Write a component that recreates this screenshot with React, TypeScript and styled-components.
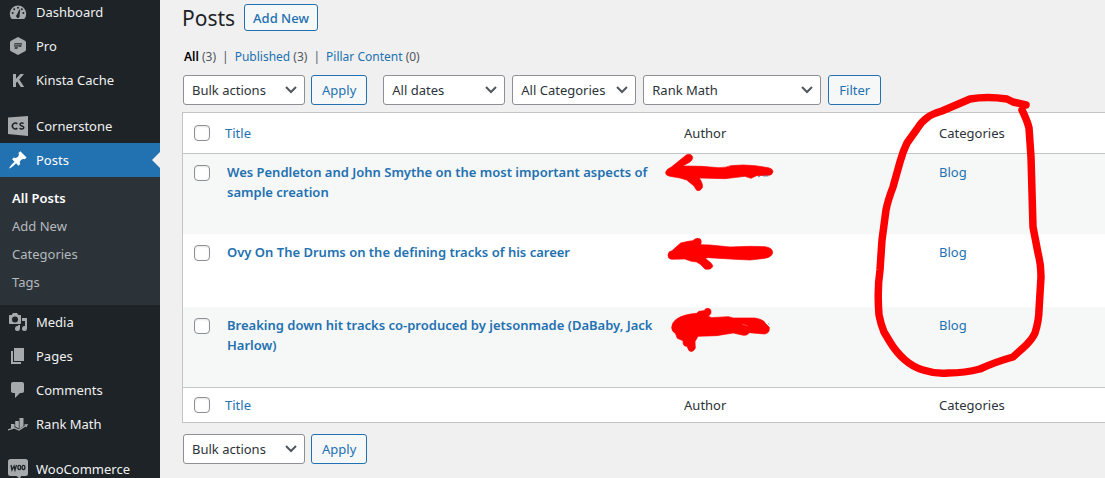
import React from "react";
import styled, { createGlobalStyle, css } from "styled-components";

const GlobalStyle = createGlobalStyle`
  *, *::before, *::after { box-sizing: border-box; }
  body {
    margin: 0;
    background: #f0f0f0;
    color: #2c3338;
    font-family: "Noto Sans", "Open Sans", sans-serif;
    font-size: 13px;
    line-height: 20px;
  }
  a { color: #2271b1; text-decoration: none; }
`;

const Screen = styled.div`
  position: relative;
  display: flex;
  height: 100vh;
  overflow: hidden;
`;

const Sidebar = styled.nav`
  flex: 0 0 160px;
  background: #1d2327;
  overflow: hidden;
`;

const Menu = styled.ul`
  list-style: none;
  margin: -5px 0 0;
  padding: 0;
`;

const MenuItem = styled.li<{ $gap?: number }>`
  margin-top: ${(p) => p.$gap ?? 0}px;
`;

const MenuLink = styled.a<{ $active?: boolean }>`
  position: relative;
  display: flex;
  align-items: center;
  height: 34px;
  padding-left: 8px;
  gap: 8px;
  font-size: 13px;
  color: ${(p) => (p.$active ? "#fff" : "#f0f0f1")};
  background: ${(p) => (p.$active ? "#2271b1" : "transparent")};
  svg { flex: 0 0 20px; color: ${(p) => (p.$active ? "#fff" : "#a7aaad")}; }
  ${(p) =>
    p.$active &&
    css`
      &::after {
        content: "";
        position: absolute;
        right: 0;
        top: 9px;
        border: 8px solid transparent;
        border-right-color: #f0f0f0;
        border-left-width: 0;
      }
    `}
`;

const SubMenu = styled.ul`
  list-style: none;
  margin: 0;
  padding: 7px 0 9px;
  background: #2c3338;
`;

const SubLink = styled.a<{ $current?: boolean }>`
  display: block;
  padding: 4px 12px;
  font-size: 13px;
  color: ${(p) => (p.$current ? "#fff" : "#b4b9be")};
  font-weight: ${(p) => (p.$current ? 600 : 400)};
`;

const Main = styled.main`
  flex: 1;
  min-width: 0;
  padding: 4px 0 0 22px;
`;

const Heading = styled.header`
  display: flex;
  align-items: center;
  gap: 9px;
  height: 27px;
`;

const Title = styled.h1`
  margin: 0;
  font-size: 21px;
  line-height: 28px;
  font-weight: 400;
  color: #1d2327;
`;

const AddNew = styled.button`
  height: 27px;
  padding: 0 8px;
  border: 1px solid #2271b1;
  border-radius: 3px;
  background: #f6f7f7;
  color: #2271b1;
  font: 500 13px "Noto Sans", sans-serif;
`;

const Views = styled.ul`
  display: flex;
  gap: 6px;
  list-style: none;
  margin: 16px 0 8px;
  padding: 0 0 0 2px;
  font-size: 12px;
  color: #50575e;
  li + li::before { content: "|"; margin-right: 6px; }
`;

const CurrentView = styled.a`
  color: #000;
  font-weight: 600;
`;

const Toolbar = styled.div`
  display: flex;
  align-items: center;
  padding: 0 1px;
  gap: 7px;
`;

const Group = styled.div`
  display: flex;
  gap: 6px;
  margin-right: 9px;
`;

const SelectBox = styled.span<{ $width: number }>`
  position: relative;
  display: block;
  width: ${(p) => p.$width}px;
  svg { position: absolute; right: 8px; top: 10px; pointer-events: none; }
`;

const Select = styled.select`
  appearance: none;
  display: block;
  width: 100%;
  height: 30px;
  padding: 0 24px 0 8px;
  border: 1px solid #8c8f94;
  border-radius: 3px;
  background: #fff;
  color: #2c3338;
  font: 13px "Noto Sans", sans-serif;
`;

const Button = styled.button`
  height: 30px;
  padding: 0 10px;
  border: 1px solid #2271b1;
  border-radius: 3px;
  background: #f6f7f7;
  color: #2271b1;
  font: 13px "Noto Sans", sans-serif;
`;

const Table = styled.table`
  width: 100%;
  margin: 7px 0 11px;
  border: 1px solid #c3c4c7;
  border-right: 0;
  border-spacing: 0;
  table-layout: fixed;
  background: #fff;
  th, td { padding: 0; text-align: left; font-weight: 400; vertical-align: top; }
  thead th { height: 41px; vertical-align: middle; border-bottom: 1px solid #c3c4c7; }
  tfoot th { height: 35px; vertical-align: middle; border-top: 1px solid #c3c4c7; }
`;

const CheckCol = styled.col`
  width: 42px;
`;
const TitleCol = styled.col``;
const InfoCol = styled.col<{ $width: string }>`
  width: ${(p) => p.$width};
`;

const PostRow = styled.tr`
  &:nth-child(odd) { background: #f6f7f7; }
  td { height: 73px; padding: 8px 0 32px; }
`;

const TitleCell = styled.td`
  a { display: block; padding: 0 16px 0 2px; font-weight: 600; }
`;

const Check = styled.input`
  appearance: none;
  display: block;
  width: 16px;
  height: 16px;
  margin: 0 0 0 11px;
  border: 1px solid #8c8f94;
  border-radius: 4px;
  background: #fff;
  box-shadow: inset 0 1px 2px rgba(0, 0, 0, 0.1);
  td & { margin-top: 3px; }
`;

const Markup = styled.svg`
  position: absolute;
  left: 0;
  top: 0;
  pointer-events: none;
`;

const dark = "#1d2327";

const DashboardIcon = () => (
  <svg width="20" height="20" viewBox="0 0 20 20">
    <path fill="currentColor" d="M3.8 17h12.4a8.2 8.2 0 1 0-12.4 0z" />
    <g fill={dark}>
      <circle cx="10" cy="5.7" r="1" /><circle cx="6.2" cy="7.3" r="1" /><circle cx="13.8" cy="7.3" r="1" />
      <circle cx="4.6" cy="11" r="1" /><circle cx="15.4" cy="11" r="1" />
      <path d="M11.3 7.4l.9.3-.6 5.600a1.800 1.800 0 1 1-2.600-.8z" />
    </g>
  </svg>
);
const ProIcon = () => (
  <svg width="20" height="20" viewBox="0 0 20 20">
    <path fill="currentColor" d="M10 1l7 3.7q1 .6 1 1.6v7.4q0 1-1 1.6L10 19l-7-3.700q-1-.6-1-1.600V6.300q0-1 1-1.600z" />
    <path fill={dark} opacity=".75" d="M6.500 7H14l-.8 4H10l-.7 2H6.500l.5-2h-.8z" />
    <path stroke="#a7aaad" strokeWidth=".5" d="M7 8.600h6M7 10.200h4" />
  </svg>
);
const KinstaIcon = () => (
  <svg width="20" height="20" viewBox="0 0 20 20">
    <path fill="currentColor" d="M5 4h3v4.800L12.400 4H16l-4.800 5.500L16.200 17h-3.500L9.200 11.600 8 13v4H5z" />
  </svg>
);
const CornerstoneIcon = () => (
  <svg width="20" height="20" viewBox="0 0 20 20">
    <path fill="currentColor" d="M0 1.500L20 0v20L0 18z" />
    <g fill="none" stroke={dark} strokeWidth="1.500">
      <path d="M9.300 7.900A2.900 2.900 0 1 0 9.300 12.100" />
      <path d="M15.600 7.500c-1-.8-3.600-.9-3.600.9 0 2 3.800 1 3.800 3 0 2-3 1.800-4.200.8" />
    </g>
  </svg>
);
const PinIcon = () => (
  <svg width="20" height="20" viewBox="0 0 20 20">
    <path fill="currentColor" d="M10.440 3.020l1.820-1.820 6.360 6.350-1.830 1.820c-1.050-.68-2.480-.57-3.410.36l-.75.750c-.92.930-1.040 2.350-.350 3.410l-1.830 1.820-2.410-2.410-2.800 2.790c-.42.420-3.380 2.710-3.800 2.290s1.860-3.390 2.280-3.810l2.790-2.790L4.100 9.360l1.830-1.820c1.050.69 2.480.57 3.400-.36l.75-.75c.93-.92 1.050-2.350.36-3.410z" />
  </svg>
);
const MediaIcon = () => (
  <svg width="20" height="20" viewBox="0 0 20 20">
    <path fill="currentColor" fillRule="evenodd" d="M13 11V4c0-.55-.45-1-1-1h-1.670L9 1H5L3.670 3H2c-.55 0-1 .45-1 1v7c0 .55.45 1 1 1h10c.55 0 1-.45 1-1zM7 4.500a3 3 0 1 1 0 6 3 3 0 0 1 0-6zM14 6h5v10.500a2.500 2.500 0 1 1-2-2.450V9h-3zm-4 8.050V13h2v3.500a2.500 2.500 0 1 1-2-2.450z" />
  </svg>
);
const PagesIcon = () => (
  <svg width="20" height="20" viewBox="0 0 20 20">
    <path fill="currentColor" d="M6 15V2h10v13zm-1 1h8v2H3V5h2z" />
  </svg>
);
const CommentsIcon = () => (
  <svg width="20" height="20" viewBox="0 0 20 20">
    <path fill="currentColor" d="M5 2h9c1.100 0 2 .9 2 2v7c0 1.100-.9 2-2 2h-2l-5 5v-5H5c-1.100 0-2-.9-2-2V4c0-1.100.9-2 2-2z" />
  </svg>
);
const RankIcon = () => (
  <svg width="20" height="20" viewBox="0 0 20 20">
    <path fill="currentColor" d="M3 10h3.500v3.500L3 15zM7.200 7h3.600v7.500l-3.600-2zM11.500 4h4v8l-4 3z" />
    <path fill="none" stroke="currentColor" strokeWidth="1.300" d="M0 16l6.500-2 4.500 2 7-4.500" />
    <path fill="currentColor" d="M16 10.500l4-.5-1.500 3.500z" />
  </svg>
);
const WooIcon = () => (
  <svg width="20" height="20" viewBox="0 0 20 20">
    <path fill="currentColor" d="M2.500 0h15Q20 0 20 2.500v12q0 2.500-2.500 2.500H13l-1 3-3.500-3h-6Q0 17 0 14.500v-12Q0 0 2.500 0z" />
    <g fill="none" stroke={dark} strokeWidth="1.300">
      <path d="M3 6l1 5 2-4 1 4 1.500-5" />
      <ellipse cx="11.300" cy="8.500" rx="1.400" ry="2.100" /><ellipse cx="15.500" cy="8.500" rx="1.400" ry="2.100" />
    </g>
  </svg>
);

type Item = { label: string; icon: React.FC; gap?: number; sub?: string[] };

const menu: Item[] = [
  { label: "Dashboard", icon: DashboardIcon },
  { label: "Pro", icon: ProIcon },
  { label: "Kinsta Cache", icon: KinstaIcon },
  { label: "Cornerstone", icon: CornerstoneIcon, gap: 12 },
  { label: "Posts", icon: PinIcon, sub: ["All Posts", "Add New", "Categories", "Tags"] },
  { label: "Media", icon: MediaIcon },
  { label: "Pages", icon: PagesIcon },
  { label: "Comments", icon: CommentsIcon },
  { label: "Rank Math", icon: RankIcon },
  { label: "WooCommerce", icon: WooIcon, gap: 11 },
];

const posts = [
  "Wes Pendleton and John Smythe on the most important aspects of sample creation",
  "Ovy On The Drums on the defining tracks of his career",
  "Breaking down hit tracks co-produced by jetsonmade (DaBaby, Jack Harlow)",
];

const Dropdown = ({ label, text, width }: { label: string; text: string; width: number }) => (
  <SelectBox $width={width}>
    <Select aria-label={label}>
      <option>{text}</option>
    </Select>
    <svg width="12" height="10" viewBox="0 0 12 10">
      <path d="M1 2l5 5 5-5" fill="none" stroke="#50575e" strokeWidth="2" />
    </svg>
  </SelectBox>
);

const BulkActions = () => (
  <Group>
    <Dropdown label="Select bulk action" text="Bulk actions" width={122} />
    <Button>Apply</Button>
  </Group>
);

const HeadingCells = () => (
  <tr>
    <th><Check type="checkbox" aria-label="Select all" /></th>
    <th><a href="#title">Title</a></th>
    <th>Author</th>
    <th>Categories</th>
  </tr>
);

export default function App() {
  return (
    <Screen>
      <GlobalStyle />
      <Sidebar>
        <Menu>
          {menu.map(({ label, icon: Icon, gap, sub }) => (
            <MenuItem key={label} $gap={gap}>
              <MenuLink href="#menu" $active={!!sub}>
                <Icon />
                {label}
              </MenuLink>
              {sub && (
                <SubMenu>
                  {sub.map((s, i) => (
                    <li key={s}><SubLink href="#sub" $current={i === 0}>{s}</SubLink></li>
                  ))}
                </SubMenu>
              )}
            </MenuItem>
          ))}
        </Menu>
      </Sidebar>
      <Main>
        <Heading>
          <Title>Posts</Title>
          <AddNew>Add New</AddNew>
        </Heading>
        <Views>
          <li><CurrentView href="#all">All</CurrentView> (3)</li>
          <li><a href="#published">Published</a> (3)</li>
          <li><a href="#pillar">Pillar Content</a> (0)</li>
        </Views>
        <Toolbar>
          <BulkActions />
          <Dropdown label="Filter by date" text="All dates" width={122} />
          <Dropdown label="Filter by category" text="All Categories" width={124} />
          <Dropdown label="Filter by Rank Math" text="Rank Math" width={178} />
          <Button>Filter</Button>
        </Toolbar>
        <Table>
          <colgroup>
            <CheckCol />
            <TitleCol />
            <InfoCol $width="255px" />
            <InfoCol $width="18%" />
          </colgroup>
          <thead><HeadingCells /></thead>
          <tbody>
            {posts.map((p) => (
              <PostRow key={p}>
                <td><Check type="checkbox" aria-label={`Select ${p}`} /></td>
                <TitleCell><a href="#post">{p}</a></TitleCell>
                <td />
                <td><a href="#blog">Blog</a></td>
              </PostRow>
            ))}
          </tbody>
          <tfoot><HeadingCells /></tfoot>
        </Table>
        <Toolbar><BulkActions /></Toolbar>
      </Main>
      <Markup width="1105" height="478" viewBox="0 0 1105 478" aria-hidden="true">
        <path
          fill="none" stroke="#f00" strokeWidth="7.500" strokeLinecap="round" strokeLinejoin="round"
          d="M1026 105L1013 102 1007 99Q987 96 970 99L942 111Q932 114 928 117 921 122 917 129L907 143Q903 151 900 162L893 187Q888 200 886 210L882 240 880 270Q877 290 879 315 881 325 884 332L890 342Q896 352 905 360 913 367 923 370 935 374 948 373 965 373 980 369 995 362 1013 357L1023 348Q1032 340 1035 333 1039 320 1039 310L1041 277Q1041 264 1038 253L1033 227 1031 157 1029 128Q1027 120 1022 110"
        />
        <g transform="translate(640 150) scale(.3333)">
          <g fill="#f00" stroke="#f00" strokeWidth="2" strokeLinejoin="round">
            <path d="M140 14Q155 10 158 22 158 31 150 36L128 48 185 49 235 53Q260 53 272 47 310 43 345 47L385 53Q399 56 399 65 397 76 385 76L350 77 333 85 315 79 255 86 178 84Q190 103 187 113 180 126 170 121L162 108 140 90 120 84 90 79Q75 76 77 67 80 57 93 52z" />
            <path d="M84 316Q84 304 96 302L122 279 145 274 158 272Q170 261 181 267 186 273 182 284L210 285 270 291 330 289 375 290Q398 293 398 308 396 321 375 325L330 330 285 328 205 323 195 325Q221 343 218 350 211 361 195 357L181 343Q170 333 154 334L134 327 95 328Q84 327 84 316z" />
            <path d="M95 532Q96 517 110 507 130 493 170 490L177 484 192 482Q200 470 212 479 217 491 205 499L215 503 265 500 280 504 345 504Q372 509 376 520L388 532Q390 550 374 552L327 548Q323 557 310 556L280 549 230 557 174 559 165 575 166 594Q159 609 147 602L141 589Q128 590 129 572L112 565 106 550Q95 545 95 532z" />
          </g>
          <path stroke="#ff4a4a" strokeWidth="3" fill="none" d="M307 523l8 2 8 3" />
          <path stroke="#2271b1" strokeWidth="3" opacity=".7" d="M308 79h3M354 80h6M369 78h16M384 522h4" />
        </g>
      </Markup>
    </Screen>
  );
}
